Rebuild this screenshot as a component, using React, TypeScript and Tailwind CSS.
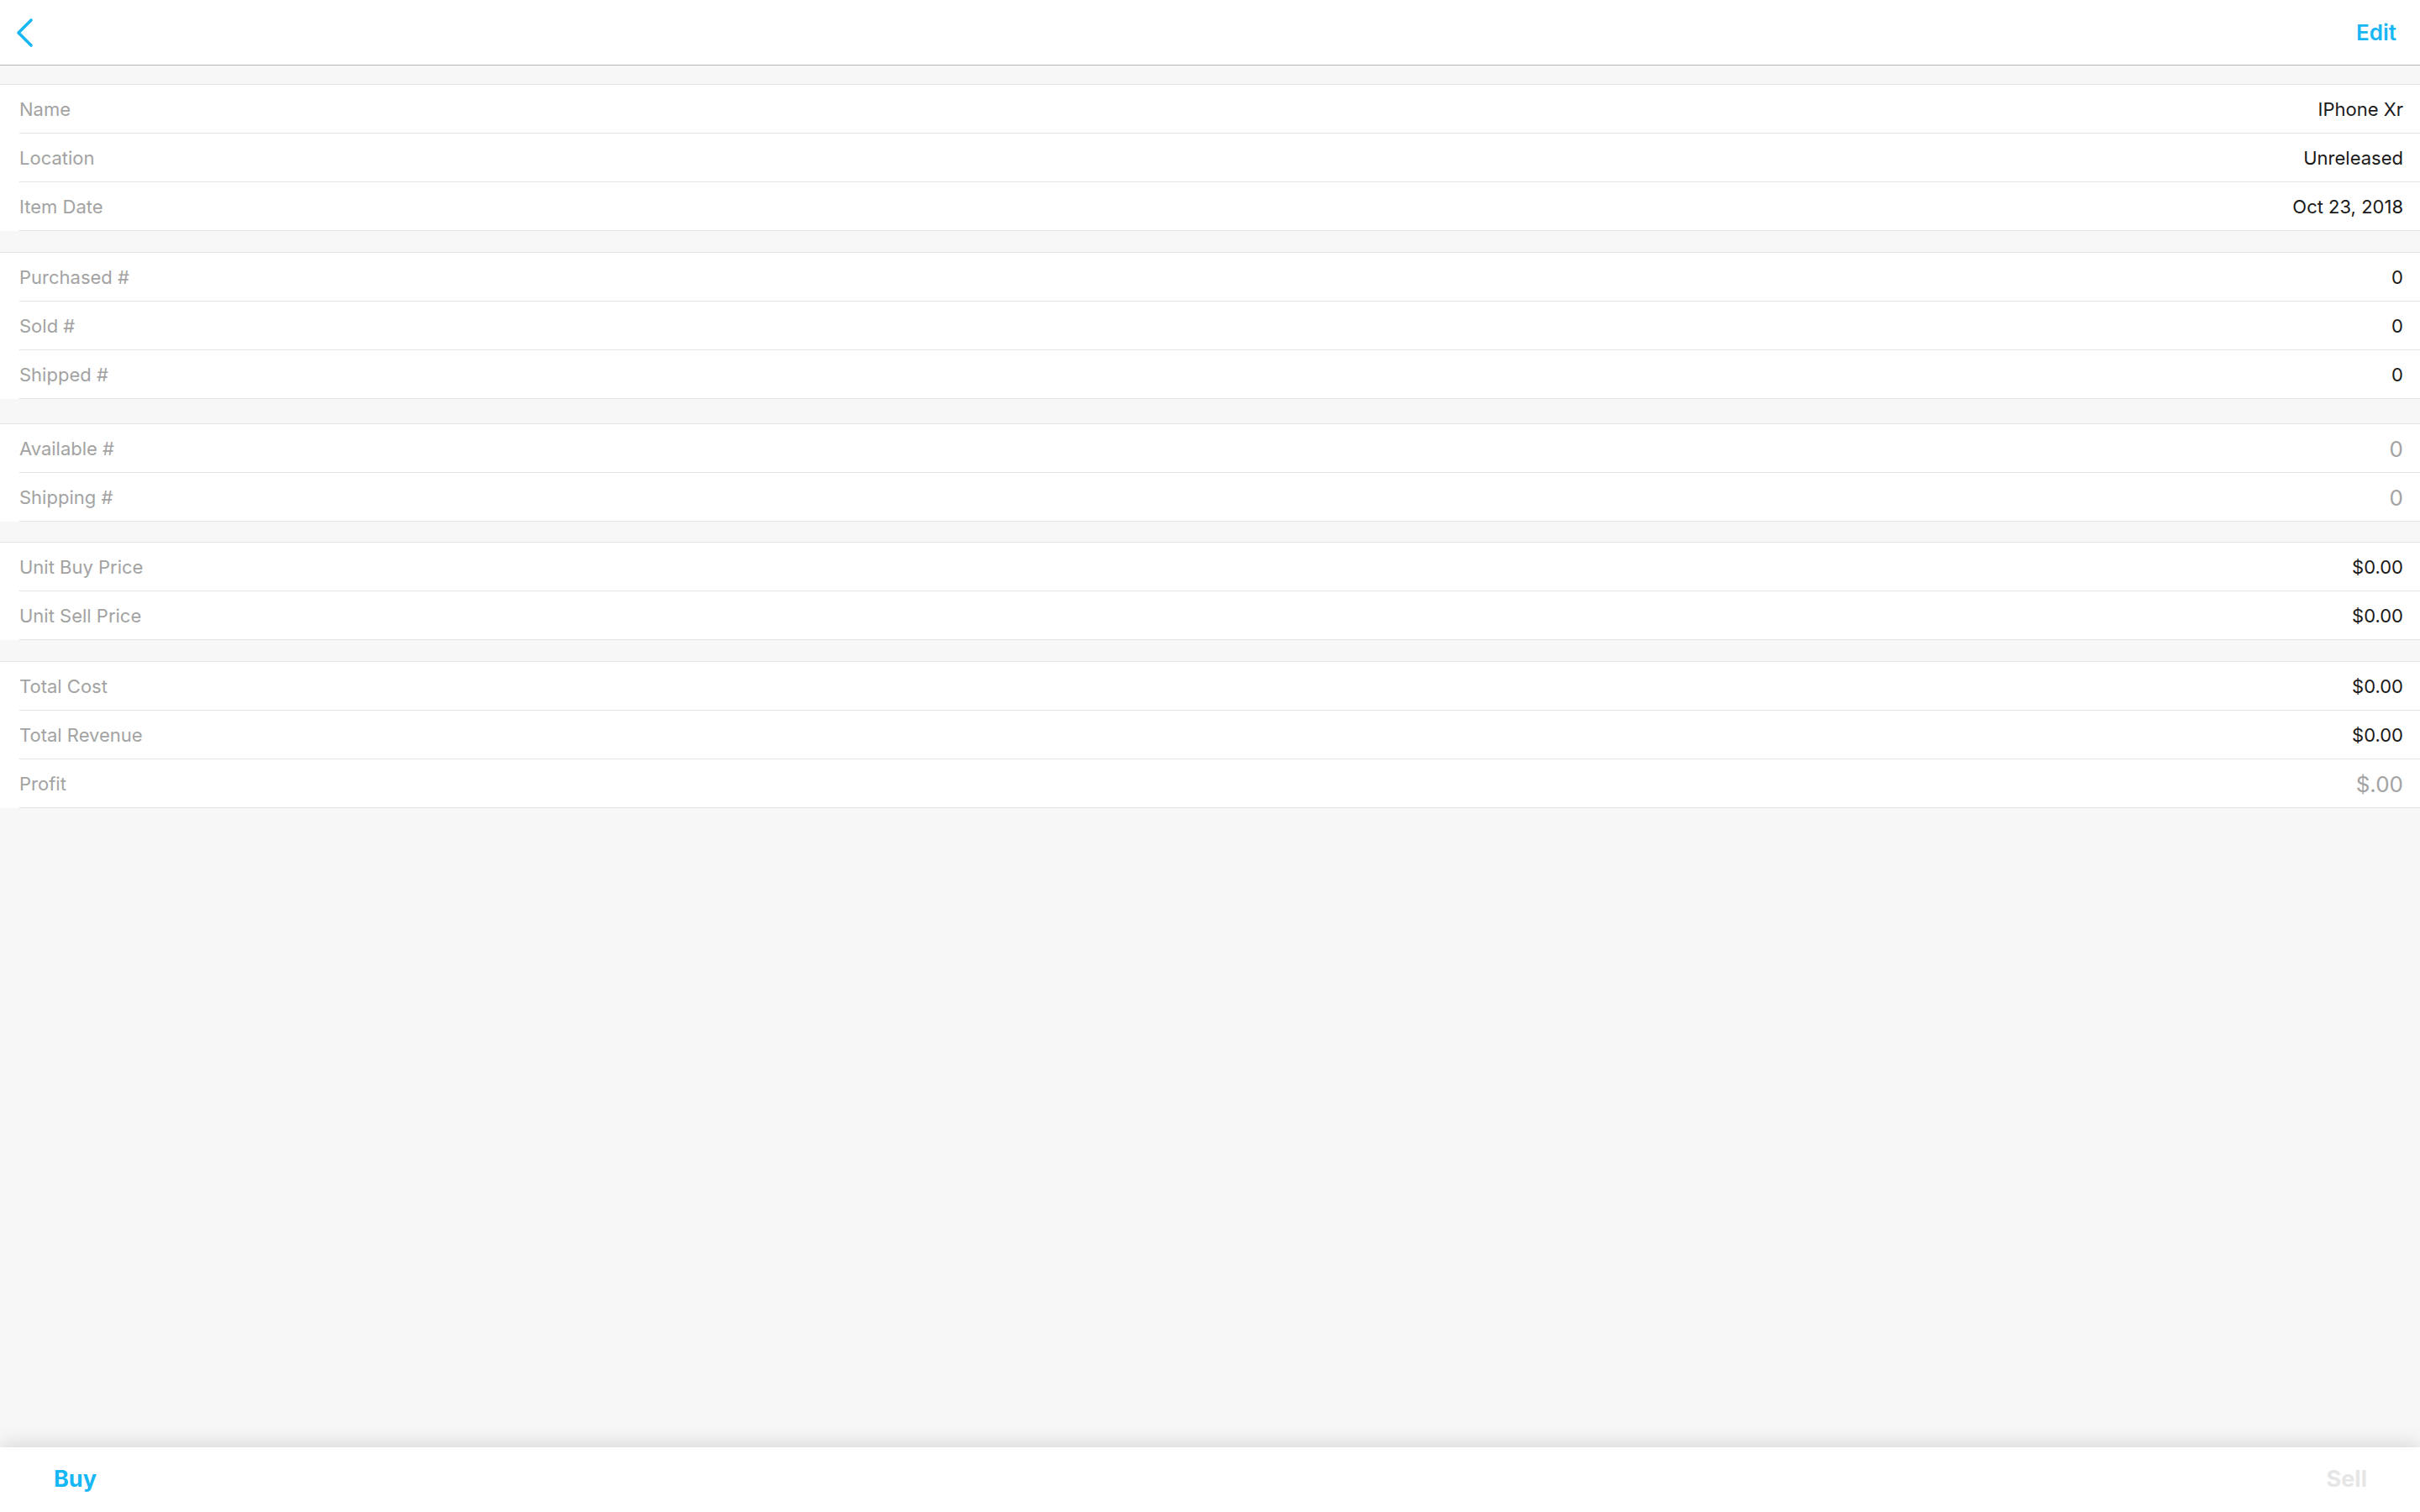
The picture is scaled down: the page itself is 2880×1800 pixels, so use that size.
import React from "react";

type Row = { label: string; value: string; muted?: boolean };

const sections: { gap: string; rows: Row[] }[] = [
  {
    gap: "mt-[22px]",
    rows: [
      { label: "Name", value: "IPhone Xr" },
      { label: "Location", value: "Unreleased" },
      { label: "Item Date", value: "Oct 23, 2018" },
    ],
  },
  {
    gap: "mt-[25px]",
    rows: [
      { label: "Purchased #", value: "0" },
      { label: "Sold #", value: "0" },
      { label: "Shipped #", value: "0" },
    ],
  },
  {
    gap: "mt-[29px]",
    rows: [
      { label: "Available #", value: "0", muted: true },
      { label: "Shipping #", value: "0", muted: true },
    ],
  },
  {
    gap: "mt-[24px]",
    rows: [
      { label: "Unit Buy Price", value: "$0.00" },
      { label: "Unit Sell Price", value: "$0.00" },
    ],
  },
  {
    gap: "mt-[25px]",
    rows: [
      { label: "Total Cost", value: "$0.00" },
      { label: "Total Revenue", value: "$0.00" },
      { label: "Profit", value: "$.00", muted: true },
    ],
  },
];

function DetailRow({ row }: { row: Row }) {
  return (
    <div className="flex h-[58px] bg-white pl-[23px]">
      <div className="flex flex-1 items-center justify-between border-b border-[#e4e4e4] pr-[20px] pt-[1px]">
        <span className="text-[22px] text-[#a3a3a3]">{row.label}</span>
        <span
          className={
            row.muted
              ? "text-[26px] text-[#a3a3a3]"
              : "text-[22px] text-[#1a1a1a]"
          }
        >
          {row.value}
        </span>
      </div>
    </div>
  );
}

export default function App() {
  return (
    <div className="flex h-screen flex-col bg-[#f7f7f7] font-['Inter','Helvetica_Neue',sans-serif]">
      <header className="flex h-[78px] shrink-0 items-center justify-between border-b border-[#b4b4b4] bg-white pl-[18px] pr-[28px]">
        <button type="button" aria-label="Back" className="flex h-[40px] w-[24px] items-center">
          <svg width="22" height="36" viewBox="0 0 22 36" fill="none">
            <polyline
              points="19,3 4,18 19,33"
              stroke="#17b6f5"
              strokeWidth="3.6"
              strokeLinecap="round"
              strokeLinejoin="round"
            />
          </svg>
        </button>
        <button type="button" className="text-[26px] font-semibold text-[#17b6f5]">
          Edit
        </button>
      </header>

      <main className="flex-1">
        {sections.map((s, i) => (
          <section key={i} className={`${s.gap} border-t border-[#e4e4e4]`}>
            {s.rows.map((r) => (
              <DetailRow key={r.label} row={r} />
            ))}
          </section>
        ))}
      </main>

      <footer className="relative flex h-[77px] shrink-0 items-center justify-between bg-white px-[64px] shadow-[0_-4px_22px_rgba(0,0,0,0.13)]">
        <button type="button" className="text-[27px] font-bold text-[#17b6f5]">
          Buy
        </button>
        <button type="button" disabled className="mr-[-1px] text-[27px] font-bold text-[#e6e6e6]">
          Sell
        </button>
      </footer>
    </div>
  );
}
